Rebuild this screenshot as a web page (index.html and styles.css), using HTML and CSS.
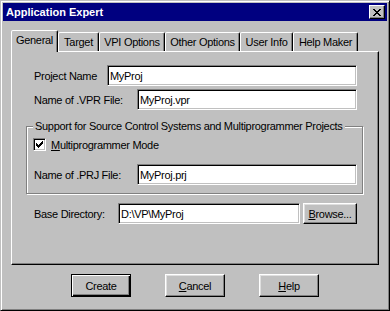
FILE: index.html
```html
<!DOCTYPE html>
<html>
<head>
<meta charset="utf-8">
<link rel="stylesheet" href="styles.css">
</head>
<body>
<div class="window">
  <div class="titlebar">
    <span class="title">Application Expert</span>
    <button class="close" aria-label="Close">
      <svg width="8" height="7" viewBox="0 0 8 7" shape-rendering="crispEdges"><path fill="#000" d="M0 0h2v1H0zM6 0h2v1H6zM1 1h2v1H1zM5 1h2v1H5zM2 2h4v1H2zM3 3h2v1H3zM2 4h4v1H2zM1 5h2v1H1zM5 5h2v1H5zM0 6h2v1H0zM6 6h2v1H6z"/></svg>
    </button>
  </div>
  <div class="body">
    <div class="tabs">
      <div class="tab active t-general">General</div>
      <div class="tab t-target">Target</div>
      <div class="tab t-vpi">VPI Options</div>
      <div class="tab t-other">Other Options</div>
      <div class="tab t-user">User Info</div>
      <div class="tab t-help">Help Maker</div>
    </div>
    <div class="panel">
      <div class="row">
        <span class="lbl w-project">Project Name</span>
        <div class="field">MyProj</div>
      </div>
      <div class="row">
        <span class="lbl w-file">Name of .VPR File:</span>
        <div class="field">MyProj.vpr</div>
      </div>
      <fieldset class="group">
        <legend>Support for Source Control Systems and Multiprogrammer Projects</legend>
        <div class="check-row">
          <span class="checkbox">
            <svg width="7" height="7" viewBox="0 0 7 7" shape-rendering="crispEdges"><path fill="#000" d="M6 0h1v1H6zM5 1h2v1H5zM0 2h1v1H0zM4 2h3v1H4zM0 3h2v1H0zM3 3h3v1H3zM0 4h5v1H0zM1 5h3v1H1zM2 6h1v1H2z"/></svg>
          </span>
          <span class="check-label"><u>M</u>ultiprogrammer Mode</span>
        </div>
        <div class="row in-group">
          <span class="lbl w-file">Name of .PRJ File:</span>
          <div class="field">MyProj.prj</div>
        </div>
      </fieldset>
      <div class="row base">
        <span class="lbl w-base">Base Directory:</span>
        <div class="field short">D:\VP\MyProj</div>
        <button class="btn browse"><u>B</u>rowse...</button>
      </div>
    </div>
    <div class="actions">
      <button class="btn default">Create</button>
      <button class="btn"><u>C</u>ancel</button>
      <button class="btn"><u>H</u>elp</button>
    </div>
  </div>
</div>
</body>
</html>
```
FILE: styles.css
```css
* { box-sizing: border-box; }

body {
  margin: 0;
  font-family: "Liberation Sans", Arial, sans-serif;
  font-size: 11px;
  color: #000;
}

.window {
  width: 390px;
  height: 311px;
  background: #c0c0c0;
  border: 1px solid;
  border-color: #c0c0c0 #000 #000 #c0c0c0;
  box-shadow: inset 1px 1px #fff, inset -1px -1px #808080;
  padding: 2px;
  display: flex;
  flex-direction: column;
}

.titlebar {
  height: 18px;
  flex: none;
  background: #000080;
  color: #fff;
  display: flex;
  align-items: center;
  justify-content: space-between;
  padding: 0 2px 0 3px;
}

.title {
  font-weight: bold;
  font-size: 11px;
}

.close {
  width: 16px;
  height: 14px;
  padding: 0;
  background: #c0c0c0;
  border: 1px solid;
  border-color: #fff #000 #000 #fff;
  box-shadow: inset -1px -1px #808080;
  display: flex;
  align-items: center;
  justify-content: center;
}

.body {
  flex: 1;
  padding: 9px 8px 0;
  display: flex;
  flex-direction: column;
}

.tabs {
  display: flex;
  align-items: flex-end;
  height: 21px;
  flex: none;
  position: relative;
  z-index: 1;
}

.tab {
  height: 19px;
  border: 1px solid;
  border-bottom: none;
  border-color: #fff #000 transparent #fff;
  border-radius: 2px 2px 0 0;
  box-shadow: inset -1px 0 #808080;
  background: #c0c0c0;
  display: flex;
  align-items: center;
  justify-content: center;
  letter-spacing: -0.3px;
  white-space: nowrap;
}

.tab.active {
  height: 22px;
  margin-bottom: -1px;
  padding-bottom: 3px;
}

.t-general { width: 47px; }
.t-target { width: 41px; }
.t-vpi { width: 66px; }
.t-other { width: 75px; }
.t-user { width: 53px; }
.t-help { width: 65px; }

.panel {
  height: 214px;
  flex: none;
  border: 1px solid;
  border-color: #fff #000 #000 #fff;
  box-shadow: inset -1px -1px #808080;
  padding: 13px 15px 0 14px;
  display: flex;
  flex-direction: column;
}

.row {
  display: flex;
  align-items: center;
  height: 21px;
  flex: none;
  padding: 0 6px 0 8px;
}

.row + .row { margin-top: 3px; }

.lbl {
  flex: none;
  letter-spacing: -0.3px;
  white-space: nowrap;
}

.w-project { width: 73px; }
.w-file { width: 103px; }
.w-base { width: 84px; }

.field {
  flex: 1;
  height: 21px;
  background: #fff;
  border: 1px solid;
  border-color: #808080 #fff #fff #808080;
  box-shadow: inset 1px 1px #000, inset -1px -1px #c0c0c0;
  padding: 0 2px;
  display: flex;
  align-items: center;
  letter-spacing: -0.3px;
  white-space: nowrap;
}

.field.short {
  flex: none;
  width: 182px;
}

.group {
  margin: 10px 0 0;
  padding: 0 0 8px;
  border: 1px solid #808080;
  box-shadow: inset 1px 1px #fff, 1px 1px #fff;
  min-width: 0;
}

.group legend {
  margin-left: 6px;
  padding: 0 2px;
  line-height: 13px;
  letter-spacing: -0.3px;
  white-space: nowrap;
  background: #c0c0c0;
}

.check-row {
  display: flex;
  align-items: center;
  height: 13px;
  margin: 5px 0 0 6px;
}

.checkbox {
  width: 13px;
  height: 13px;
  background: #fff;
  border: 1px solid;
  border-color: #808080 #fff #fff #808080;
  box-shadow: inset 1px 1px #000, inset -1px -1px #c0c0c0;
  display: flex;
  align-items: center;
  justify-content: center;
}

.check-label {
  margin-left: 5px;
  letter-spacing: -0.3px;
}

.row.in-group {
  margin-top: 13px;
  padding: 0 5px 0 7px;
}

.row.base { margin-top: 9px; }

.btn {
  width: 60px;
  height: 23px;
  padding: 0;
  background: #c0c0c0;
  border: 1px solid;
  border-color: #fff #000 #000 #fff;
  box-shadow: inset -1px -1px #808080, inset 1px 1px #dfdfdf;
  font-family: "Liberation Sans", Arial, sans-serif;
  font-size: 11px;
  letter-spacing: -0.3px;
  color: #000;
}

.btn.browse {
  width: 54px;
  height: 21px;
  margin-left: 3px;
  flex: none;
}

.btn.default {
  border-color: #000;
  box-shadow: inset 1px 1px #fff, inset -1px -1px #000, inset -2px -2px #808080;
}

.actions {
  display: flex;
  justify-content: center;
  gap: 34px;
  margin-top: 9px;
}
```
